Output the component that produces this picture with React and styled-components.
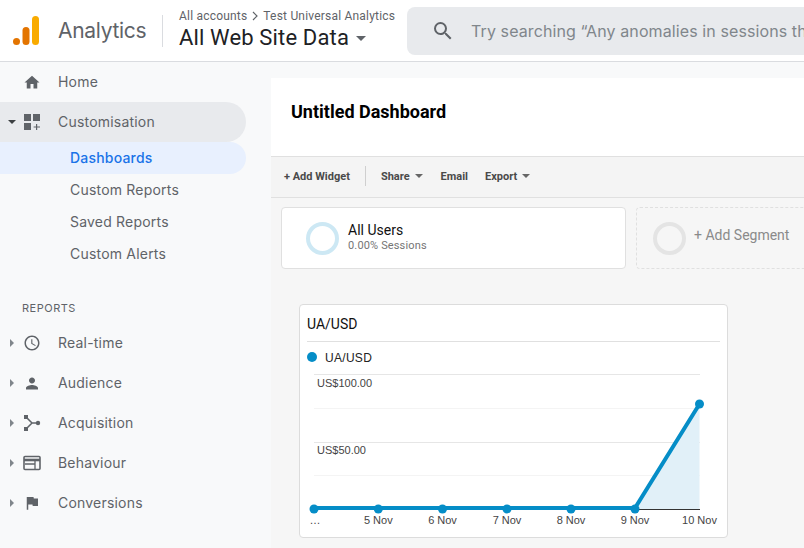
import React from 'react';
import styled, { createGlobalStyle } from 'styled-components';
import { MdHome, MdPerson, MdFlag, MdAccessTime, MdSearch } from 'react-icons/md';

const GlobalStyle = createGlobalStyle`
  html, body {
    margin: 0;
    padding: 0;
    height: 100%;
    overflow: hidden;
    background: #f8f9fa;
    font-family: Roboto, "Liberation Sans", sans-serif;
  }
`;

const Page = styled.div`
  width: 804px;
  height: 548px;
  overflow: hidden;
  display: flex;
  flex-direction: column;
`;

const Header = styled.header`
  height: 61px;
  flex: none;
  display: flex;
  align-items: center;
  background: #fff;
  border-bottom: 1px solid #dadce0;
`;

const Logo = styled.svg`
  width: 28px;
  height: 32px;
  margin-left: 12px;
  flex: none;
`;

const Product = styled.div`
  margin-left: 18px;
  font-family: Inter, Roboto, sans-serif;
  font-size: 21px;
  letter-spacing: -0.3px;
  color: #5f6368;
  width: 89px;
`;

const Divider = styled.div`
  width: 1px;
  height: 32px;
  margin-left: 15px;
  background: #dadce0;
`;

const Account = styled.div`
  margin-left: 16px;
  width: 228px;
  flex: none;
`;

const Crumbs = styled.div`
  font-size: 12px;
  line-height: 16px;
  letter-spacing: 0.2px;
  color: #5f6368;
  display: flex;
  align-items: center;
  gap: 5px;
`;

const View = styled.div`
  font-size: 22px;
  line-height: 28px;
  letter-spacing: 0.15px;
  color: #202124;
  margin-bottom: 1px;
  display: flex;
  align-items: center;
  gap: 7px;
`;

const Caret = styled.span`
  display: inline-block;
  width: 0;
  height: 0;
  border-left: ${p => p.$size || 4}px solid transparent;
  border-right: ${p => p.$size || 4}px solid transparent;
  border-top: ${p => p.$size || 4}px solid ${p => p.$color || '#5f6368'};
`;

const Search = styled.div`
  flex: 1;
  height: 48px;
  min-width: 0;
  background: #e8eaed;
  border-radius: 8px 0 0 8px;
  display: flex;
  align-items: center;
  overflow: hidden;
  white-space: nowrap;
  color: #80868b;
  font-family: Inter, Roboto, sans-serif;
  font-size: 16px;
  letter-spacing: 0.1px;
  svg {
    flex: none;
    margin-left: 24px;
    margin-right: 16px;
    color: #5f6368;
  }
`;

const Body = styled.div`
  flex: 1;
  display: flex;
  min-height: 0;
`;

const Sidebar = styled.nav`
  width: 270px;
  flex: none;
  background: #f8f9fa;
`;

const NavRow = styled.div`
  height: 40px;
  width: 246px;
  display: flex;
  align-items: center;
  border-radius: 0 20px 20px 0;
  background: ${p => (p.$open ? '#e8eaed' : 'transparent')};
  font-family: Inter, Roboto, sans-serif;
  font-size: 14px;
  letter-spacing: 0.2px;
  color: #5f6368;
`;

const NavLabel = styled.span`
  margin-bottom: 2px;
`;

const Arrow = styled.span`
  width: 24px;
  flex: none;
  display: flex;
  justify-content: center;
`;

const RightCaret = styled.span`
  display: inline-block;
  width: 0;
  height: 0;
  border-top: 4px solid transparent;
  border-bottom: 4px solid transparent;
  border-left: 4px solid #80868b;
`;

const IconBox = styled.span`
  width: 18px;
  flex: none;
  display: flex;
  justify-content: center;
  color: #5f6368;
  margin-left: -1px;
  margin-right: 17px;
`;

const SubRow = styled.div`
  height: 32px;
  width: 176px;
  padding: 0 0 2px 70px;
  box-sizing: content-box;
  height: 30px;
  display: flex;
  align-items: center;
  border-radius: 0 16px 16px 0;
  font-family: Inter, Roboto, sans-serif;
  font-size: 14px;
  letter-spacing: 0.2px;
  font-weight: ${p => (p.$active ? 500 : 400)};
  background: ${p => (p.$active ? '#e8f0fe' : 'transparent')};
  color: ${p => (p.$active ? '#1a73e8' : '#5f6368')};
`;

const SectionLabel = styled.div`
  margin-top: 30px;
  padding-left: 22px;
  height: 23px;
  line-height: 16px;
  font-family: Inter, Roboto, sans-serif;
  font-size: 11px;
  letter-spacing: 0.5px;
  color: #5f6368;
`;

const Main = styled.main`
  flex: 1;
  min-width: 0;
  padding-top: 16px;
  padding-left: 1px;
  display: flex;
  flex-direction: column;
`;

const TitleBar = styled.div`
  height: 79px;
  flex: none;
  padding: 23px 0 0 20px;
  box-sizing: border-box;
  background: #fff;
  border-bottom: 1px solid #e0e0e0;
  font-size: 18px;
  line-height: 22px;
  font-weight: 700;
  color: #000;
`;

const Canvas = styled.div`
  flex: 1;
  background: #f6f6f6;
`;

const Toolbar = styled.div`
  height: 38px;
  padding: 0 0 2px 13px;
  display: flex;
  align-items: center;
  background: #f4f4f4;
  border-bottom: 1px solid #e0e0e0;
  font-size: 11px;
  font-weight: 700;
  color: #4a4a4a;
`;

const ToolButton = styled.span`
  display: flex;
  align-items: center;
  gap: 5px;
  margin-right: ${p => p.$gap || 17}px;
`;

const ToolDivider = styled.span`
  width: 1px;
  height: 20px;
  margin: 0 15px 0 0;
  background: #cfcfcf;
`;

const Segments = styled.div`
  display: flex;
  gap: 10px;
  padding: 9px 0 0 10px;
`;

const Segment = styled.div`
  box-sizing: border-box;
  height: 62px;
  flex: none;
  width: ${p => p.$width}px;
  border-radius: 4px;
  display: flex;
  align-items: center;
  background: ${p => (p.$dashed ? 'transparent' : '#fff')};
  border: 1px ${p => (p.$dashed ? 'dashed' : 'solid')} #e0e0e0;
  padding-left: ${p => p.$pad}px;
`;

const Ring = styled.span`
  box-sizing: border-box;
  width: 33px;
  height: 33px;
  flex: none;
  border-radius: 50%;
  border: 4px solid ${p => p.$color};
  margin-right: ${p => p.$gap}px;
`;

const SegmentName = styled.div`
  font-size: 14px;
  line-height: 15px;
  color: #111;
`;

const SegmentMeta = styled.div`
  font-size: 11px;
  line-height: 15px;
  letter-spacing: 0.15px;
  color: #757575;
`;

const AddLabel = styled.div`
  font-size: 14px;
  color: #8a8a8a;
  margin-bottom: 6px;
`;

const Widget = styled.section`
  box-sizing: border-box;
  width: 429px;
  height: 234px;
  margin: 35px 0 0 28px;
  background: #fff;
  border: 1px solid #dcdcdc;
  border-radius: 4px;
`;

const WidgetTitle = styled.div`
  height: 37px;
  box-sizing: border-box;
  margin: 0 7px;
  border-bottom: 1px solid #e0e0e0;
  font-size: 14px;
  line-height: 38px;
  color: #111;
`;

const Legend = styled.div`
  height: 30px;
  margin-left: 7px;
  display: flex;
  align-items: center;
  gap: 8px;
  font-family: "Liberation Sans", Arial, sans-serif;
  font-size: 12px;
  letter-spacing: 0.3px;
  color: #222;
`;

const LegendLabel = styled.span`
  margin-top: 2px;
`;

const Dot = styled.span`
  width: 10px;
  height: 10px;
  border-radius: 50%;
  background: #058dc7;
`;

const ChartSvg = styled.svg`
  display: block;
  width: 427px;
  height: 166px;
  text {
    font-family: "Liberation Sans", Arial, sans-serif;
    font-size: 11px;
    fill: #444;
  }
`;

const LogoMark = () => (
  <Logo viewBox="0 0 28 32">
    <rect x="20" y="1" width="7" height="29" rx="3.5" fill="#f9ab00" />
    <rect x="10.5" y="12" width="7" height="18" rx="3.5" fill="#e37400" />
    <circle cx="4.5" cy="26.5" r="3.5" fill="#e37400" />
  </Logo>
);

const CustomIcon = () => (
  <svg width="18" height="18" viewBox="0 0 18 18" fill="#5f6368">
    <rect x="1" y="1" width="7" height="7" />
    <rect x="10" y="1" width="7" height="7" />
    <rect x="1" y="10" width="7" height="7" />
    <path d="M13 11h1.2v2.4H17v1.2h-2.8V17H13v-2.4h-2.4v-1.2H13z" />
  </svg>
);

const AcquisitionIcon = () => (
  <svg width="18" height="18" viewBox="0 0 18 18" fill="#5f6368">
    <rect x="1" y="1" width="4" height="4" />
    <rect x="1" y="13" width="4" height="4" />
    <circle cx="15" cy="9" r="2.2" />
    <path d="M3 3l6 6-6 6M9 9h6" fill="none" stroke="#5f6368" strokeWidth="1.5" />
  </svg>
);

const BehaviourIcon = () => (
  <svg width="18" height="18" viewBox="0 0 18 18" fill="none" stroke="#5f6368">
    <rect x="1" y="2.5" width="16" height="13" rx="1" strokeWidth="1.6" />
    <path d="M1 6h16" strokeWidth="2.6" />
    <path d="M2 10h10M12 7v8" strokeWidth="1.3" />
  </svg>
);

const pointX = [14, 78.3, 142.5, 207, 271, 335, 399.5];
const pointY = [137, 137, 137, 137, 137, 137, 32];
const dayLabels = ['…', '5 Nov', '6 Nov', '7 Nov', '8 Nov', '9 Nov', '10 Nov'];

const Chart = () => (
  <ChartSvg viewBox="0 0 427 166">
    <g stroke="#e6e6e6">
      <path d="M14 2.5h386M14 70.5h386" />
    </g>
    <g stroke="#f4f4f4">
      <path d="M14 36.5h386M14 103.5h386" />
    </g>
    <path d="M335 137L399.5 32V137z" fill="#e1f0f8" />
    <path d="M14 137.5h386" stroke="#333" />
    <polyline
      points={pointX.map((x, i) => `${x},${pointY[i] - (i < 6 ? 1 : 0)}`).join(' ')}
      fill="none"
      stroke="#058dc7"
      strokeWidth="4"
    />
    {pointX.map((x, i) => (
      <circle key={x} cx={x} cy={pointY[i]} r="4.5" fill="#058dc7" />
    ))}
    <text x="17" y="15">US$100.00</text>
    <text x="17" y="82">US$50.00</text>
    {dayLabels.map((label, i) => (
      <text key={label} x={i === 0 ? 15 : pointX[i]} y="152" textAnchor="middle">{label}</text>
    ))}
  </ChartSvg>
);

const reports = [
  ['Real-time', <MdAccessTime size={22} />],
  ['Audience', <MdPerson size={21} />],
  ['Acquisition', <AcquisitionIcon />],
  ['Behaviour', <BehaviourIcon />],
  ['Conversions', <MdFlag size={22} />],
];

export default function App() {
  return (
    <Page>
      <GlobalStyle />
      <Header>
        <LogoMark />
        <Product>Analytics</Product>
        <Divider />
        <Account>
          <Crumbs>
            All accounts
            <svg width="6" height="10" viewBox="0 0 6 10" fill="none" stroke="#5f6368" strokeWidth="1.2">
              <path d="M1 1l4 4-4 4" />
            </svg>
            Test Universal Analytics
          </Crumbs>
          <View>All Web Site Data <Caret $size={5} /></View>
        </Account>
        <Search>
          <MdSearch size={24} />
          Try searching “Any anomalies in sessions this month?”
        </Search>
      </Header>
      <Body>
        <Sidebar>
          <NavRow>
            <Arrow />
            <IconBox><MdHome size={21} /></IconBox>
            <NavLabel>Home</NavLabel>
          </NavRow>
          <NavRow $open>
            <Arrow><Caret $color="#3c4043" /></Arrow>
            <IconBox><CustomIcon /></IconBox>
            <NavLabel>Customisation</NavLabel>
          </NavRow>
          <SubRow $active>Dashboards</SubRow>
          <SubRow>Custom Reports</SubRow>
          <SubRow>Saved Reports</SubRow>
          <SubRow>Custom Alerts</SubRow>
          <SectionLabel>REPORTS</SectionLabel>
          {reports.map(([label, icon]) => (
            <NavRow key={label}>
              <Arrow><RightCaret /></Arrow>
              <IconBox>{icon}</IconBox>
              <NavLabel>{label}</NavLabel>
            </NavRow>
          ))}
        </Sidebar>
        <Main>
          <TitleBar>Untitled Dashboard</TitleBar>
          <Canvas>
            <Toolbar>
              <ToolButton $gap={15}>+ Add Widget</ToolButton>
              <ToolDivider />
              <ToolButton $gap={18}>Share <Caret $color="#666" /></ToolButton>
              <ToolButton>Email</ToolButton>
              <ToolButton>Export <Caret $color="#666" /></ToolButton>
            </Toolbar>
            <Segments>
              <Segment $width={345} $pad={24}>
                <Ring $color="#cde8f4" $gap={9} />
                <div>
                  <SegmentName>All Users</SegmentName>
                  <SegmentMeta>0.00% Sessions</SegmentMeta>
                </div>
              </Segment>
              <Segment $width={200} $pad={16} $dashed>
                <Ring $color="#e4e4e4" $gap={8} />
                <AddLabel>+ Add Segment</AddLabel>
              </Segment>
            </Segments>
            <Widget>
              <WidgetTitle>UA/USD</WidgetTitle>
              <Legend><Dot /><LegendLabel>UA/USD</LegendLabel></Legend>
              <Chart />
            </Widget>
          </Canvas>
        </Main>
      </Body>
    </Page>
  );
}
